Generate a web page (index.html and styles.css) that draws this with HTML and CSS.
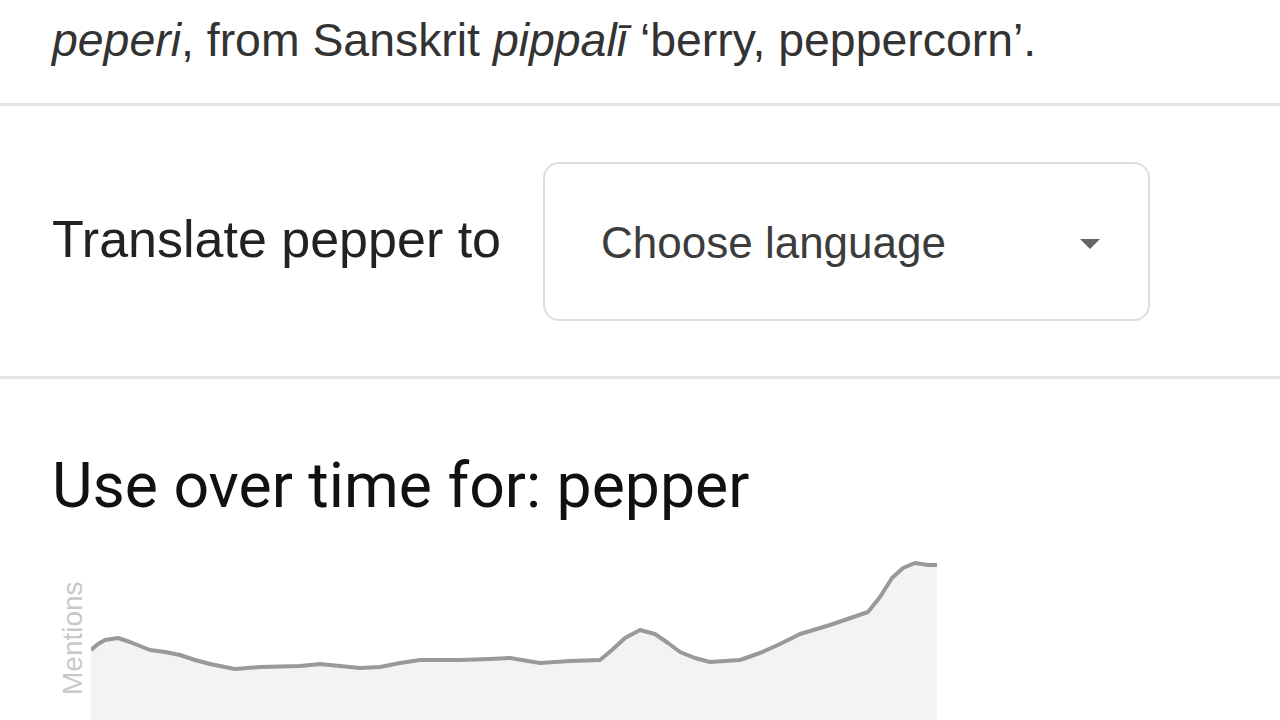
FILE: index.html
```html
<!DOCTYPE html>
<html lang="en">
  <head>
    <meta charset="UTF-8" />
    <meta name="viewport" content="width=device-width, initial-scale=1.0" />
    <title>pepper - Definition</title>
    <link rel="stylesheet" href="styles.css">
  </head>
  <body>
    <div class="origin">
      <p class="origin-text">
        <i>peperi</i>, from Sanskrit <i>pippalī</i> ‘berry, peppercorn’.
      </p>
    </div>

    <div class="translate">
      <span class="translate-label">Translate pepper to</span>
      <div class="select-box">
        <span class="select-text">Choose language</span>
        <span class="select-arrow"></span>
      </div>
    </div>

    <div class="usage">
      <h2 class="usage-title">Use over time for: pepper</h2>
      <div class="chart">
        <span class="chart-axis">Mentions</span>
        <svg class="chart-svg" width="848" height="180" viewBox="91 555 848 180">
          <path class="chart-fill" d="M91 650 L98 644 L105 640 L118 638 L130 642 L150 650 L165 652 L180 655 L195 660 L210 664 L235 669 L260 667 L300 666 L320 664 L340 666 L360 668 L380 667 L400 663 L420 660 L460 660 L490 659 L510 658 L540 663 L570 661 L600 660 L612 650 L625 638 L640 630 L655 634 L668 643 L680 652 L695 658 L710 662 L740 660 L760 653 L780 644 L800 634 L830 625 L868 612 L880 597 L892 578 L903 568 L915 563 L928 565 L937 565 L937 735 L91 735 Z" />
          <path class="chart-line" d="M91 650 L98 644 L105 640 L118 638 L130 642 L150 650 L165 652 L180 655 L195 660 L210 664 L235 669 L260 667 L300 666 L320 664 L340 666 L360 668 L380 667 L400 663 L420 660 L460 660 L490 659 L510 658 L540 663 L570 661 L600 660 L612 650 L625 638 L640 630 L655 634 L668 643 L680 652 L695 658 L710 662 L740 660 L760 653 L780 644 L800 634 L830 625 L868 612 L880 597 L892 578 L903 568 L915 563 L928 565 L937 565" />
        </svg>
      </div>
    </div>
  </body>
</html>
```

FILE: styles.css
```css
* {
  margin: 0;
  padding: 0;
  box-sizing: border-box;
}
body {
  background: #fff;
  font-family: "Liberation Sans", Arial, sans-serif;
  color: #202124;
  overflow: hidden;
}
.origin {
  padding: 13px 52px 36px;
  border-bottom: 3px solid #e4e4e4;
}
.origin-text {
  font-size: 46.4px;
  line-height: 54px;
  color: #333;
  white-space: nowrap;
}
.translate {
  display: flex;
  align-items: center;
  padding: 56px 0 55px 52px;
  border-bottom: 3px solid #e4e4e4;
}
.translate-label {
  font-size: 52px;
  color: #222;
  width: 491px;
  margin-top: -6px;
}
.select-box {
  display: flex;
  align-items: center;
  justify-content: space-between;
  width: 607px;
  height: 159px;
  padding: 0 48px 0 56px;
  border: 2px solid #dedede;
  border-radius: 16px;
}
.select-text {
  font-size: 44px;
  color: #3c3c3c;
  margin-top: 2px;
}
.select-arrow {
  width: 0;
  height: 0;
  border-left: 10px solid transparent;
  border-right: 10px solid transparent;
  border-top: 10px solid #666;
  margin-top: 4px;
}
.usage {
  padding: 71px 0 0 52px;
}
.usage-title {
  font-family: Roboto, sans-serif;
  font-weight: 400;
  font-size: 62.5px;
  line-height: 72px;
  color: #111;
}
.chart {
  display: flex;
  margin-top: 33px;
}
.chart-axis {
  writing-mode: vertical-rl;
  transform: rotate(180deg);
  font-size: 28px;
  line-height: 32px;
  color: #c8c8c8;
  width: 39px;
  height: 140px;
  padding-right: 5px;
}
.chart-fill {
  fill: #f3f3f3;
}
.chart-line {
  fill: none;
  stroke: #999;
  stroke-width: 4;
  stroke-linejoin: round;
}
```
